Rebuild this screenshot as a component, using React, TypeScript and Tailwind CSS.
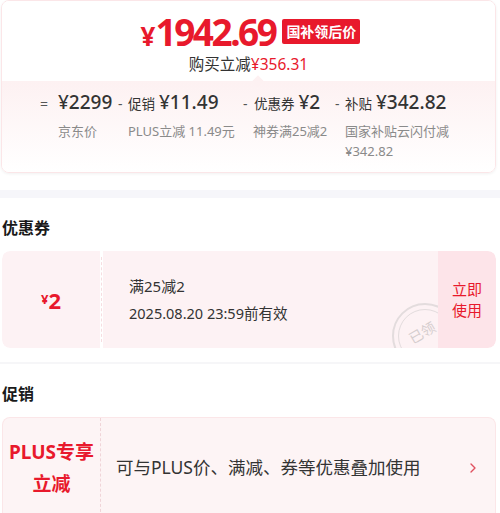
import { ChevronRight } from "lucide-react";

const font = { fontFamily: '"Noto Sans", "Noto Sans CJK SC", sans-serif' };

const parts = [
  { op: "=", opW: "w-[18px]", label: "", value: "¥2299", desc: ["京东价"], w: "w-[78px]" },
  { op: "-", opW: "w-[10px]", label: "促销", value: "¥11.49", desc: ["PLUS立减 11.49元"], w: "w-[125px]" },
  { op: "-", opW: "w-[11px]", label: "优惠券", value: "¥2", desc: ["神券满25减2"], w: "w-[92px]" },
  { op: "-", opW: "w-[10px]", label: "补贴", value: "¥342.82", desc: ["国家补贴云闪付减", "¥342.82"], w: "w-[130px]" },
];

function PriceCard() {
  return (
    <div className="ml-[1px] w-[495px] rounded-lg border border-[#fbe6e8] shadow-[0_1px_3px_rgba(0,0,0,0.06)] overflow-hidden">
      <div className="h-[80px] bg-white flex flex-col items-center pt-[12px]">
        <div className="flex items-center gap-[6px] pl-[4px]">
          <div className="flex items-baseline text-[#e8192c] font-bold leading-none">
            <span className="text-[26px]">¥</span>
            <span className="text-[37px] tracking-[-2.5px]">1942.69</span>
          </div>
          <div className="ml-[1px] bg-[#e8192c] text-white text-[14px] font-bold leading-none px-[4px] py-[5.5px] rounded-[2px]">
            国补领后价
          </div>
        </div>
        <div className="mt-[7px] text-[15.5px] leading-none text-[#333]">
          购买立减<span className="text-[#e8192c]">¥356.31</span>
        </div>
      </div>
      <div className="relative h-[91px] bg-gradient-to-b from-[#fdf1f2] to-white">
        <div className="absolute left-[252px] -top-[4px] w-[8px] h-[8px] rotate-45 bg-[#fdf1f2]" />
        <div className="flex pl-[38px] pt-[12px]">
          {parts.map((p, i) => (
            <div key={i} className={`flex flex-col ${p.w}`}>
              <div className="flex items-baseline text-[#333] leading-none">
                <span className={`${p.opW} text-[14px] text-[#555]`}>{p.op}</span>
                {p.label && <span className="text-[13.5px] mr-[4px]">{p.label}</span>}
                <span className="text-[19px] font-medium">{p.value}</span>
              </div>
              <div className={`mt-[9px] text-[13px] text-[#8a8a8a] leading-[20px] ${i === 0 ? "pl-[18px]" : "pl-[10px]"}`}>
                {p.desc.map((d) => (
                  <div key={d} className="whitespace-nowrap">{d}</div>
                ))}
              </div>
            </div>
          ))}
        </div>
      </div>
    </div>
  );
}

function Coupon() {
  return (
    <div className="ml-[2px] w-[494px] h-[97px] flex rounded-lg overflow-hidden">
      <div className="w-[98px] bg-[#fdf2f4] flex items-center justify-center rounded-l-lg text-[#e8192c] font-bold">
        <span className="text-[13px]">¥</span>
        <span className="text-[22px] leading-none">2</span>
      </div>
      <div className="w-[3px] bg-white relative">
        <div className="absolute inset-y-[6px] left-[1px] border-l border-dashed border-[#f6dde1]" />
      </div>
      <div className="relative flex-1 bg-[#fdf2f4] flex flex-col justify-center pl-[26px] text-[#333] overflow-hidden">
        <div className="text-[15px] leading-none">满25减2</div>
        <div className="mt-[12px] text-[14.5px] leading-none">2025.08.20 23:59前有效</div>
        <div className="absolute right-[-20px] top-[52px] w-[66px] h-[66px] rounded-full border-[2px] border-[#e3dcdd] flex items-center justify-center">
          <div className="w-[54px] h-[54px] rounded-full border border-[#e3dcdd] flex items-start justify-center pt-[12px] pr-[6px]">
            <span className="text-[14px] text-[#d5cdce] -rotate-[30deg]">已领</span>
          </div>
        </div>
      </div>
      <div className="w-[58px] bg-[#fde4e9] flex flex-col items-center justify-center text-[#e8192c] text-[15px] leading-[21px] rounded-r-lg">
        <span>立即</span>
        <span>使用</span>
      </div>
    </div>
  );
}

function Promo() {
  return (
    <div className="ml-[2px] w-[494px] h-[100px] flex rounded-t-lg border border-b-0 border-[#fbe6e8] bg-[#fdf4f5]">
      <div className="w-[98px] flex flex-col items-center justify-center text-[#e8192c] font-bold text-[19px] leading-[32px] border-r border-dashed border-[#f0d4d8]">
        <span>PLUS专享</span>
        <span>立减</span>
      </div>
      <div className="flex-1 flex items-center pl-[15px] pr-[14px] text-[#333] text-[17.5px]">
        <span className="flex-1 whitespace-nowrap">可与PLUS价、满减、券等优惠叠加使用</span>
        <ChevronRight className="w-[16px] h-[16px] text-[#e0505e]" strokeWidth={2} />
      </div>
    </div>
  );
}

export default function App() {
  return (
    <div className="w-[500px] h-[513px] bg-white overflow-hidden" style={font}>
      <PriceCard />
      <div className="mt-[17px] h-[8px] bg-[#f6f6fa]" />
      <div className="pl-[2px] pt-[19px] pb-[12px] text-[16px] font-bold text-[#1a1a1a] leading-[22px]">优惠券</div>
      <Coupon />
      <div className="mt-[14px] h-[2px] bg-[#f6f6f8]" />
      <div className="pl-[2px] pt-[19px] pb-[12px] text-[16px] font-bold text-[#1a1a1a] leading-[22px]">促销</div>
      <Promo />
    </div>
  );
}
